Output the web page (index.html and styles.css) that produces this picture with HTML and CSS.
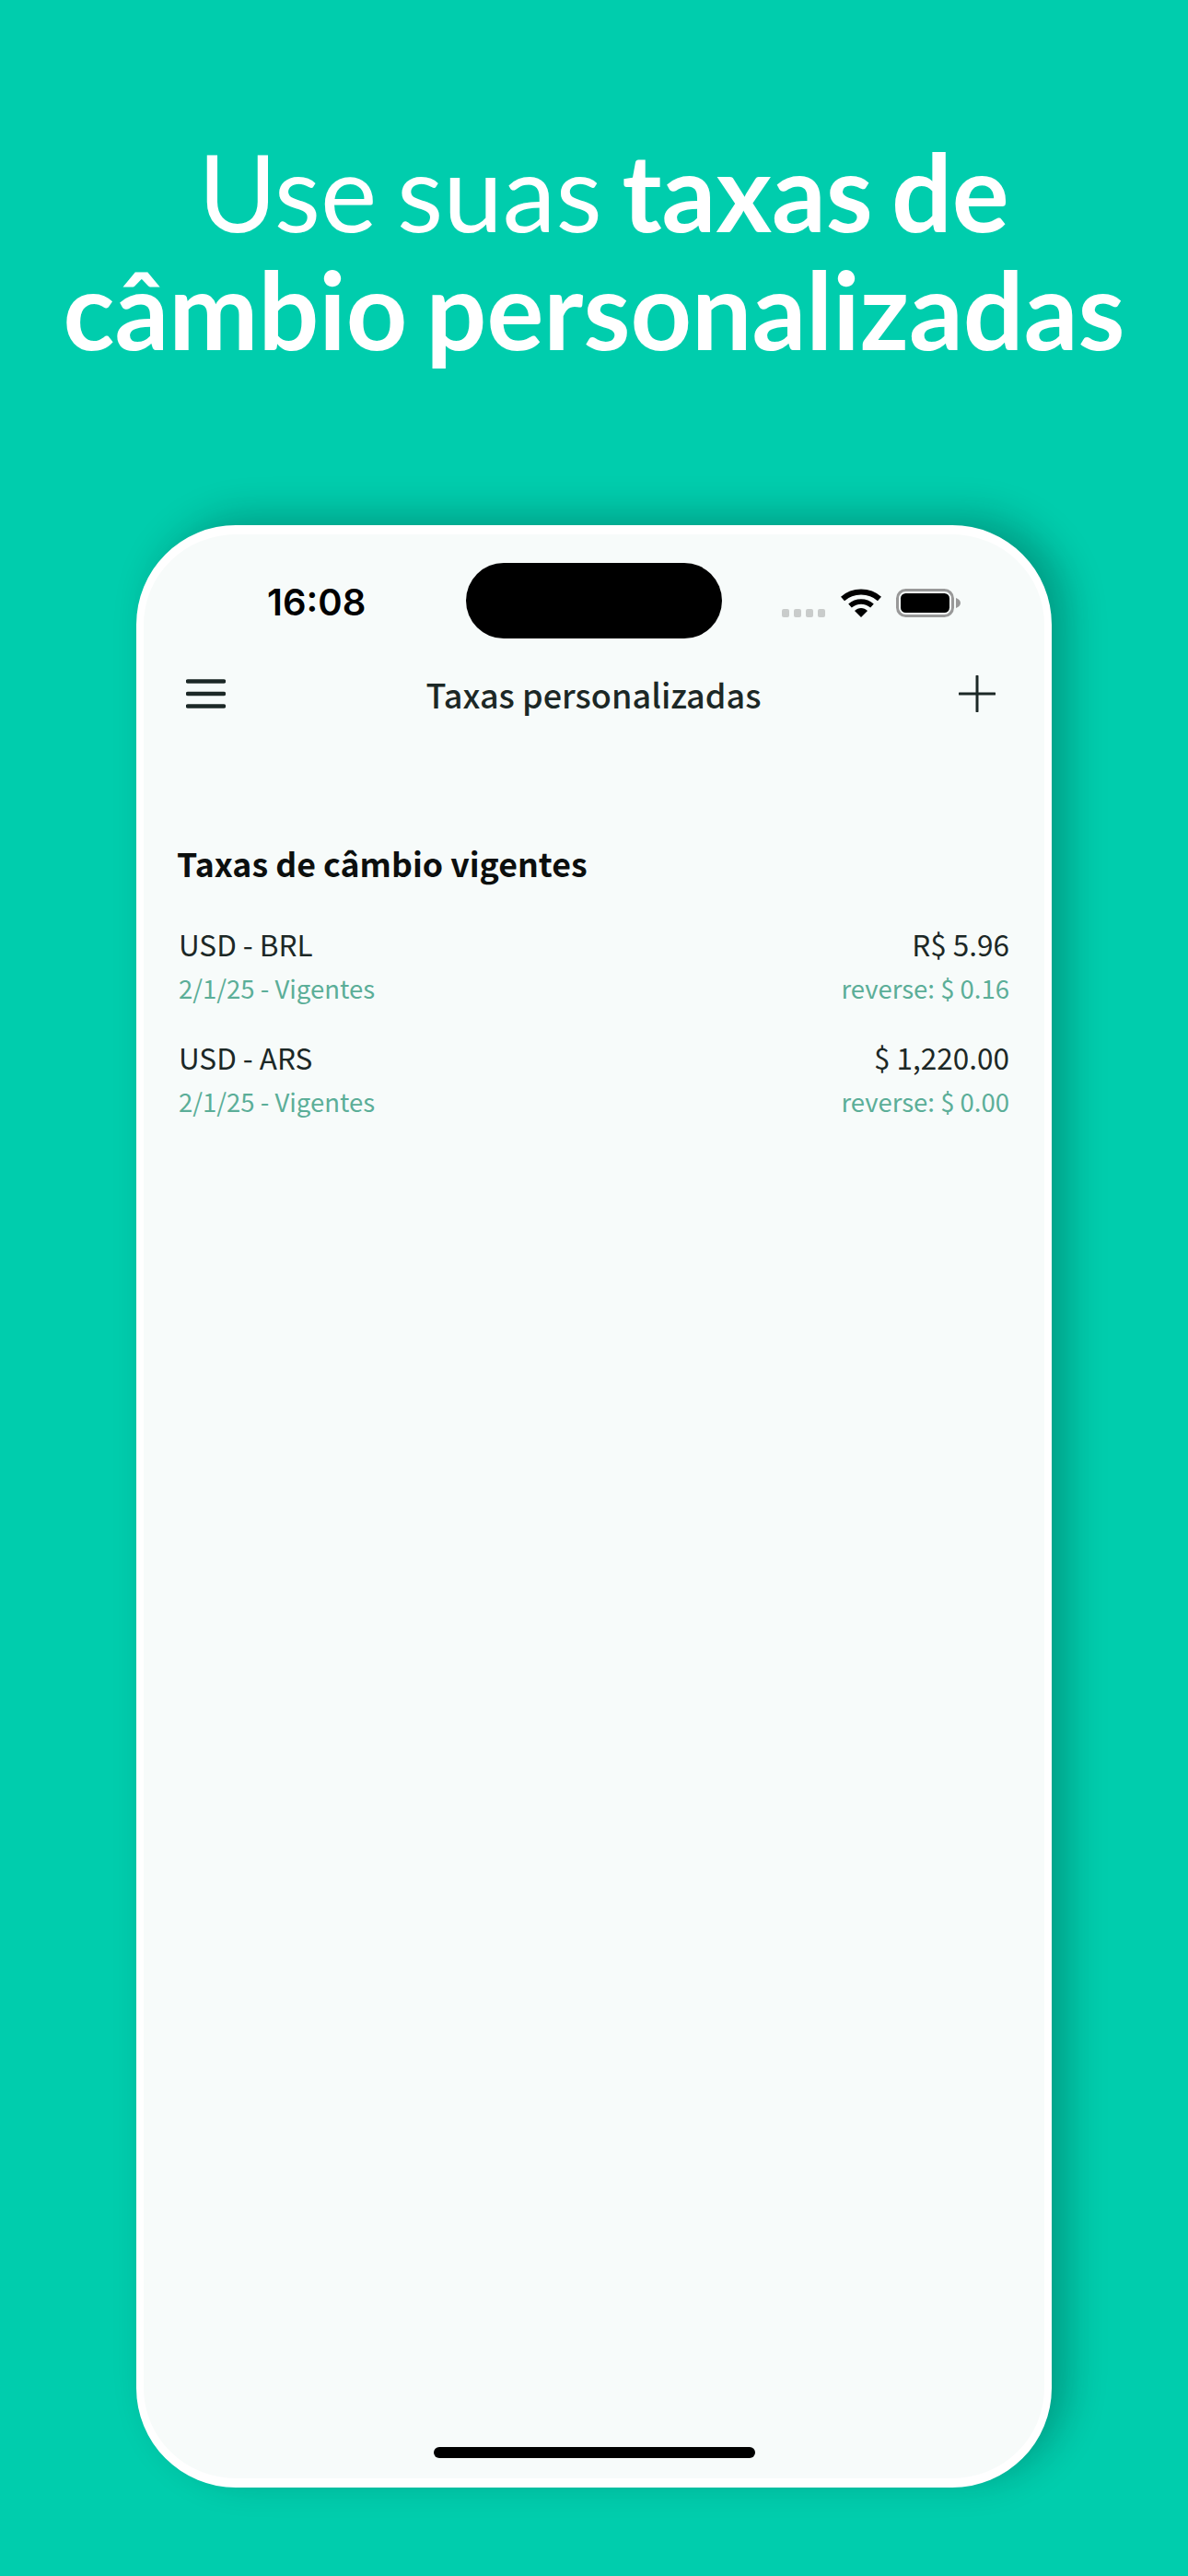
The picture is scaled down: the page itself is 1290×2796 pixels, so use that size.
FILE: index.html
```html
<!DOCTYPE html>
<html lang="pt-BR">
<head>
  <meta charset="UTF-8" />
  <meta name="viewport" content="width=device-width, initial-scale=1.0" />
  <title>Taxas personalizadas</title>
  <link rel="stylesheet" href="styles.css">
</head>
<body>
  <h1 class="headline">Use suas <b>taxas de câmbio personalizadas</b></h1>

  <div class="phone">
    <div class="status-bar">
      <span class="time">16:08</span>
      <div class="island"></div>
      <div class="status-icons">
        <div class="signal"><i></i><i></i><i></i><i></i></div>
        <svg class="wifi" width="44" height="31" viewBox="0 0 44 31">
          <path d="M2 11 C13 1 31 1 42 11" fill="none" stroke="#000" stroke-width="6" />
          <path d="M10 18.5 C17 12.5 27 12.5 34 18.5" fill="none" stroke="#000" stroke-width="5.5" />
          <path d="M15 24 C19 20 25 20 29 24 L22 31 Z" fill="#000" />
        </svg>
        <svg class="battery" width="70" height="31" viewBox="0 0 70 31">
          <rect x="1.5" y="1.5" width="60" height="28" rx="9" fill="none" stroke="#999" stroke-width="3" />
          <rect x="5" y="5" width="53" height="21" rx="5.5" fill="#000" />
          <path d="M65 10 C68 11 70 13 70 15.5 C70 18 68 20 65 21 Z" fill="#999" />
        </svg>
      </div>
    </div>

    <div class="nav">
      <svg class="menu-icon" width="43" height="32" viewBox="0 0 43 32">
        <path d="M2 2.5H41M2 16H41M2 29.5H41" stroke="#1c2826" stroke-width="4.5" stroke-linecap="round" />
      </svg>
      <span class="nav-title">Taxas personalizadas</span>
      <svg class="plus-icon" width="40" height="40" viewBox="0 0 40 40">
        <path d="M20 1V39M1 20H39" stroke="#1c2826" stroke-width="3" stroke-linecap="round" />
      </svg>
    </div>

    <div class="content">
      <h2 class="section-title">Taxas de câmbio vigentes</h2>

      <div class="rate">
        <div class="rate-row">
          <span class="pair">USD - BRL</span>
          <span class="value">R$ 5.96</span>
        </div>
        <div class="rate-row sub">
          <span>2/1/25 - Vigentes</span>
          <span>reverse: $ 0.16</span>
        </div>
      </div>

      <div class="rate">
        <div class="rate-row">
          <span class="pair">USD - ARS</span>
          <span class="value">$ 1,220.00</span>
        </div>
        <div class="rate-row sub">
          <span>2/1/25 - Vigentes</span>
          <span>reverse: $ 0.00</span>
        </div>
      </div>
    </div>

    <div class="home-indicator"></div>
  </div>
</body>
</html>
```

FILE: styles.css
```css
* {
  box-sizing: border-box;
}

html, body {
  margin: 0;
  padding: 0;
}

body {
  width: 1290px;
  height: 2796px;
  overflow: hidden;
  background-color: #00cdad;
  display: flex;
  flex-direction: column;
  align-items: center;
}

.headline {
  margin: 144px 0 0;
  width: 1240px;
  height: 426px;
  font-family: Lato, sans-serif;
  font-size: 116px;
  font-weight: 400;
  line-height: 128px;
  word-spacing: -8px;
  text-indent: 21px;
  color: #ffffff;
  text-align: center;
}

.headline b {
  font-weight: 700;
}

.phone {
  width: 994px;
  height: 2130px;
  background-color: #f7fbfa;
  border-style: solid;
  border-color: #ffffff;
  border-width: 10px 8px;
  border-radius: 108px;
  box-shadow: 18px -10px 40px rgba(0, 20, 20, 0.26);
  display: flex;
  flex-direction: column;
}

.status-bar {
  display: grid;
  grid-template-columns: 350px 278px 1fr;
  align-items: center;
  padding-top: 31px;
}

.time {
  justify-self: start;
  margin-left: 134px;
  padding-top: 4px;
  font-family: Inter, sans-serif;
  font-size: 40px;
  font-weight: 600;
  line-height: 78px;
  color: #000000;
}

.island {
  height: 82px;
  background-color: #000000;
  border-radius: 41px;
}

.status-icons {
  display: flex;
  align-items: flex-start;
  padding-left: 65px;
  height: 31px;
  margin-top: 5px;
}

.signal {
  display: flex;
  gap: 5px;
  margin-top: 22px;
  margin-right: 17px;
}

.signal i {
  width: 8px;
  height: 9px;
  border-radius: 2px;
  background-color: #c9cccb;
}

.battery {
  margin-left: 16px;
}

.nav {
  display: flex;
  justify-content: space-between;
  align-items: center;
  margin-top: 40px;
  padding: 0 53px 0 46px;
  height: 40px;
}

.nav-title {
  margin-left: 3px;
  font-family: "Noto Sans CJK SC", sans-serif;
  font-size: 36px;
  font-weight: 500;
  color: #1c2826;
}

.content {
  padding: 0 38px 0 36px;
  font-family: "Noto Sans CJK SC", sans-serif;
}

.section-title {
  margin: 138px 0 37px;
  font-size: 35.7px;
  font-weight: 700;
  line-height: 52px;
  color: #0c0f0e;
}

.rate {
  margin-bottom: 27px;
  padding-left: 2px;
}

.rate-row {
  display: flex;
  justify-content: space-between;
  font-size: 31.5px;
  line-height: 48px;
  color: #1c2826;
}

.rate-row.sub {
  font-size: 27.5px;
  color: #5bae98;
}

.home-indicator {
  width: 349px;
  height: 12px;
  margin: auto auto 22px;
  background-color: #000000;
  border-radius: 6px;
}
```
